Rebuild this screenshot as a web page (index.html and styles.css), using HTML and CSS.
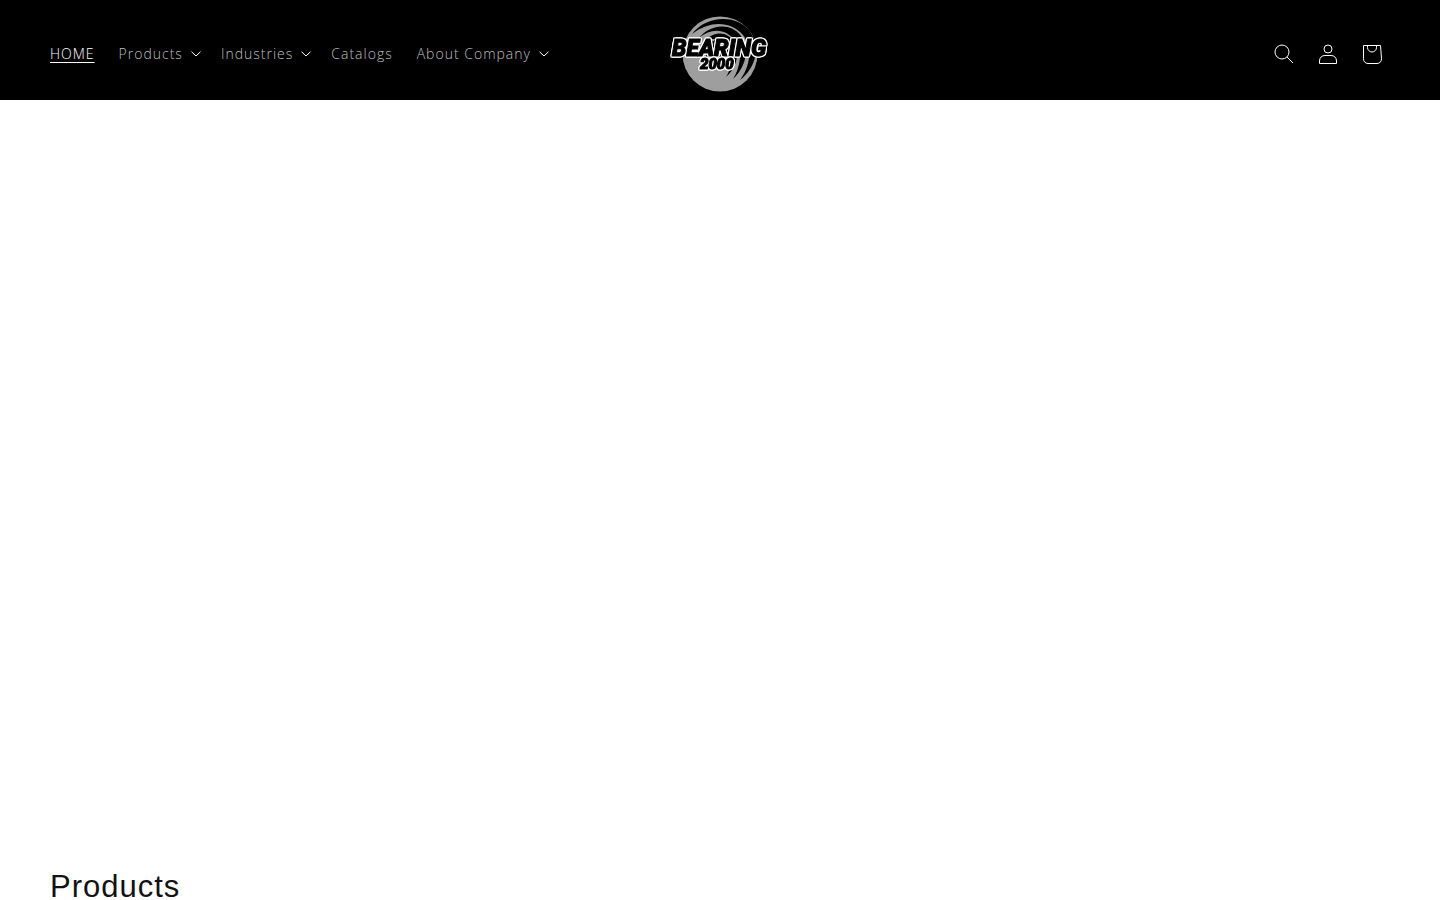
FILE: index.html
```
<!DOCTYPE html>
<html lang="en">
<head>
  <meta charset="UTF-8">
  <meta name="viewport" content="width=device-width, initial-scale=1">
  <title>Bearing 2000</title>
  <link rel="stylesheet" href="styles.css">
</head>
<body>
  <header class="header">
    <nav class="header-menu" aria-label="Main">
      <a href="#" class="menu-item active"><span>HOME</span></a>
      <button type="button" class="menu-item">Products
        <svg class="caret" viewBox="0 0 10 6"><path d="M.5 .7 5 5 9.500 .7"/></svg>
      </button>
      <button type="button" class="menu-item">Industries
        <svg class="caret" viewBox="0 0 10 6"><path d="M.5 .7 5 5 9.500 .7"/></svg>
      </button>
      <a href="#" class="menu-item">Catalogs</a>
      <button type="button" class="menu-item">About Company
        <svg class="caret" viewBox="0 0 10 6"><path d="M.5 .7 5 5 9.500 .7"/></svg>
      </button>
    </nav>
    <a href="#" class="header-logo" aria-label="Bearing 2000">
      <svg viewBox="0 0 100 76">
        <circle cx="50" cy="38" r="37.500" fill="#9e9e9e"/>
        <!-- grooves of the bearing -->
        <g fill="#000">
          <path d="M22 18C34 1 63 -3 78 13C92 30 86 52 70 64C80 51 83 32 73 19C61 5 40 4 22 18Z"/>
          <path d="M29 22C40 8 61 6 71 20C80 33 76 51 63 63C70 52 73 36 66 26C57 13 42 11 29 22Z"/>
          <path d="M35 25C45 14 58 16 64 26C70 37 67 52 56 61C62 52 63 40 58 31C52 23 45 21 35 25Z"/>
          <circle cx="51" cy="38" r="15"/>
        </g>
        <text class="logo-name" x="2" y="40">BEARING</text>
        <text class="logo-year" x="30" y="53">2000</text>
      </svg>
    </a>
    <div class="header-icons">
      <button type="button" class="icon-btn" aria-label="Search">
        <svg viewBox="0 0 20 20"><circle cx="8" cy="8" r="7"/><path d="M13 13 19 19"/></svg>
      </button>
      <a href="#" class="icon-btn" aria-label="Log in">
        <svg viewBox="0 0 20 20"><circle cx="10" cy="5" r="4"/><path d="M1.500 19.500V17C1.500 13.500 4 11.500 7 11.500H13C16 11.500 18.500 13.500 18.500 17V19.500Z"/></svg>
      </a>
      <a href="#" class="icon-btn" aria-label="Cart">
        <svg viewBox="0 0 20 20"><path d="M1.500 1.500H18.500L19.500 14.500A4.500 4.500 0 0 1 15 19.500H6A4.500 4.500 0 0 1 1.500 14.500Z"/><path d="M5.500 1.500V3.500A4.500 4.500 0 0 0 14.500 3.500V1.500"/></svg>
      </a>
    </div>
  </header>
  <main>
    <section class="banner"></section>
    <section class="products">
      <h2>Products</h2>
    </section>
  </main>
</body>
</html>
```
FILE: styles.css
```
* { box-sizing: border-box;}
body { margin: 0; background: #fff; color: #121212; font-family: 'Open Sans', 'Liberation Sans', sans-serif;}
.header { display: grid; grid-template-columns: 1fr auto 1fr; align-items: center; background: #000; padding: 16px 50px 8px;}
.header-menu { display: flex; margin-left: -12px;}
.menu-item { display: flex; align-items: center; gap: 8px; padding: 12px; border: none; background: none; color: #bfbfbf; font-family: inherit; font-size: 14px; font-weight: 300; line-height: 20px; letter-spacing: 1px; text-decoration: none; white-space: nowrap; cursor: pointer;}
button.menu-item { padding-right: 8px;}
.menu-item:hover, .menu-item.active { color: #fff;}
.menu-item.active span { text-decoration: underline; text-underline-offset: 3px;}
.caret { width: 10px; height: 6px; fill: none; stroke: #fff;}
.header-logo svg { display: block; width: 100px; height: 76px; overflow: visible;}
.logo-name, .logo-year { font-family: Roboto, sans-serif; font-weight: 900; font-style: italic; fill: #000; stroke: #000; stroke-width: 1px; filter: drop-shadow(1px 0 0 #fff) drop-shadow(-1px 0 0 #fff) drop-shadow(0 1px 0 #fff) drop-shadow(0 -1px 0 #fff);}
.logo-name { font-size: 23px;}
.logo-year { font-size: 15px;}
.header-icons { display: flex; justify-content: flex-end; margin-right: -4px;}
.icon-btn { display: flex; align-items: center; justify-content: center; width: 44px; height: 44px; padding: 0; border: none; background: none; cursor: pointer;}
.icon-btn svg { width: 20px; height: 20px; fill: none; stroke: #fff;}
.banner { height: 84vh;}
.products { padding: 12px 50px 0;}
.products h2 { margin: 0; font-family: 'Liberation Sans', Arial, sans-serif; font-size: 31px; font-weight: 400; line-height: 38px; letter-spacing: 1px;}
@media (max-width: 990px) {
  .header { padding: 16px 20px 8px;}
  .header-menu { flex-wrap: wrap;}
  .products { padding: 12px 20px 0;}
}
```
